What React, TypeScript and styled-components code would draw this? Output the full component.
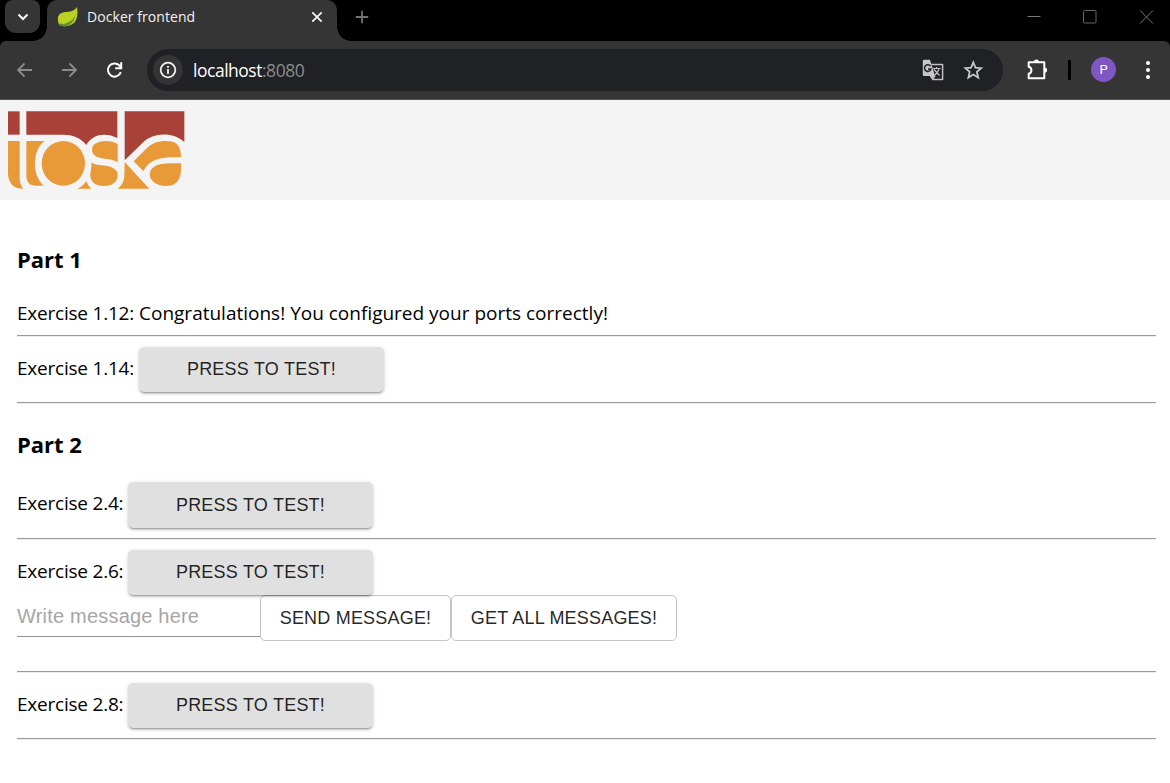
import React from "react";
import styled, { createGlobalStyle } from "styled-components";

const Global = createGlobalStyle`
  * { box-sizing: border-box; }
  body { margin: 0; background: #fff; color: #000; font-family: "Open Sans", "Noto Sans", sans-serif; }
  button, input { font-family: "Liberation Sans", Arial, sans-serif; margin: 0; }
`;

const Page = styled.div`
  width: 1170px;
  height: 783px;
  overflow: hidden;
`;

/* Browser window */
const TabStrip = styled.div`
  display: flex;
  height: 41px;
  background: #000;
`;
const TabSearch = styled.div`
  display: flex;
  align-items: center;
  justify-content: center;
  width: 35px;
  height: 33px;
  margin: 0 7px 0 5px;
  background: #353535;
  border-radius: 8px 8px 11px 11px;
`;
const Tab = styled.div`
  position: relative;
  display: flex;
  align-items: center;
  width: 290px;
  height: 41px;
  padding: 0 13px 8px 10px;
  background: #353535;
  border-radius: 10px 10px 0 0;
`;
const Flare = styled.span<{ $side: "left" | "right" }>`
  position: absolute;
  bottom: 0;
  ${(p) => (p.$side === "left" ? "left: -14px;" : "right: -14px;")}
  width: 14px;
  height: 14px;
  background: radial-gradient(
    circle at ${(p) => (p.$side === "left" ? "0 0" : "100% 0")},
    transparent 13.5px,
    #353535 14px
  );
`;
const TabTitle = styled.span`
  flex: 1;
  margin-left: 8px;
  color: #f2f2f2;
  font-size: 14px;
  letter-spacing: 0.06px;
  line-height: 20px;
  white-space: nowrap;
`;
const NewTab = styled.div`
  display: flex;
  align-items: center;
  height: 33px;
  margin-left: 18px;
`;
const WindowControls = styled.div`
  display: flex;
  align-items: center;
  gap: 42px;
  height: 33px;
  margin-left: auto;
  padding-right: 16px;
`;
const ToolbarBack = styled.div`
  background: #000;
`;
const Toolbar = styled.div`
  display: flex;
  align-items: center;
  height: 59px;
  padding: 0 13px 1px 16px;
  background: #353535;
  border-bottom: 1px solid #555;
  border-radius: 6px 6px 0 0;
`;
const NavIcons = styled.div`
  display: flex;
  align-items: center;
  gap: 26px;
  width: 131px;
`;
const AddressBar = styled.div`
  display: flex;
  align-items: center;
  width: 856px;
  height: 42px;
  padding: 0 19px 0 6px;
  background: #202124;
  border-radius: 21px;
`;
const InfoBadge = styled.div`
  display: flex;
  align-items: center;
  justify-content: center;
  width: 30px;
  height: 30px;
  background: #353535;
  border-radius: 50%;
`;
const Url = styled.span`
  flex: 1;
  margin-left: 10px;
  color: #fff;
  font-size: 17.5px;
  letter-spacing: -0.48px;
  line-height: 24px;
`;
const Port = styled.span`
  color: #8c8c8e;
`;
const AddressActions = styled.div`
  display: flex;
  align-items: center;
  gap: 18px;
`;
const ToolbarActions = styled.div`
  display: flex;
  align-items: center;
  margin-left: 23px;
`;
const Divider = styled.span`
  width: 3px;
  height: 20px;
  margin: 0 20px 0 19px;
  background: #000;
  border-radius: 1px;
`;
const Avatar = styled.span`
  display: flex;
  align-items: center;
  justify-content: center;
  width: 25px;
  height: 25px;
  margin-right: 30px;
  border-radius: 50%;
  background: #7e57c2;
  color: #fff;
  font: 13px Roboto, sans-serif;
`;

/* Page content */
const Banner = styled.header`
  height: 100px;
  background: #f4f4f4;
  svg { display: block; }
`;
const Main = styled.main`
  padding: 41px 14px 0 17px;
`;
const Heading = styled.h2<{ $gap: number }>`
  margin: 0 0 ${(p) => p.$gap}px;
  font-size: 22px;
  font-weight: 700;
  line-height: 36px;
`;
const Row = styled.div<{ $height: number }>`
  display: flex;
  align-items: flex-start;
  height: ${(p) => p.$height}px;
`;
const Label = styled.span<{ $width: number }>`
  width: ${(p) => p.$width}px;
  flex: none;
  font-size: 19px;
  letter-spacing: -0.22px;
  line-height: 42px;
  white-space: nowrap;
`;
const Message = styled.span`
  font-size: 19px;
  line-height: 42px;
  white-space: nowrap;
`;
const Rule = styled.hr<{ $after: number }>`
  height: 2px;
  margin: 0 0 ${(p) => p.$after}px;
  border: 0;
  border-top: 1px solid #9a9a9a;
  border-bottom: 1px solid #eee;
`;
const TestButton = styled.button<{ $tall?: boolean }>`
  position: relative;
  width: 245px;
  height: ${(p) => (p.$tall ? 46 : 45)}px;
  padding: 0 0 ${(p) => (p.$tall ? 0 : 1)}px;
  border: 0;
  border-radius: 5px;
  background: #e0e0e0;
  color: rgba(0, 0, 0, 0.87);
  font-size: 18px;
  letter-spacing: 0.22px;
  box-shadow: 0 3px 1px -2px rgba(0, 0, 0, 0.2), 0 2px 2px 0 rgba(0, 0, 0, 0.14),
    0 1px 5px 0 rgba(0, 0, 0, 0.12);
`;
const MessageInput = styled.input`
  width: 243px;
  height: 42px;
  padding: 1px 0 0;
  border: 0;
  border-bottom: 1px solid #949494;
  border-radius: 0;
  background: transparent;
  font-size: 20px;
  letter-spacing: 0.2px;
  &::placeholder { color: #a6a6a6; opacity: 1; }
`;
const OutlineButton = styled.button<{ $width: number }>`
  width: ${(p) => p.$width}px;
  height: 46px;
  padding: 1px 0 0;
  border: 1px solid #c4c4c4;
  border-radius: 5px;
  background: transparent;
  color: rgba(0, 0, 0, 0.87);
  font-size: 18px;
  letter-spacing: 0.2px;
  white-space: nowrap;
`;

const Leaf = () => (
  <svg width="22" height="22" viewBox="0 0 22 22">
    <path d="M20 1C21 8 21 19 10 20C6 20.5 3 20 2 19C-1 10 2 6 10 6C15 5.500 18 4 20 1Z" fill="#bccf22" />
    <path d="M2.500 18.500C10 18 16 15 18.500 9C17 17 12 21 4 20Z" fill="#5d9432" />
    <circle cx="3.500" cy="18.800" r="1.200" fill="#3f7a2c" />
  </svg>
);

const Translate = () => (
  <svg width="22" height="22" viewBox="0 0 22 22">
    <path d="M9.500 5.500H20.600V20.600H11L8.500 17" fill="none" stroke="#c0c0c0" strokeWidth="1.500" strokeLinejoin="round" />
    <path d="M2 .8H8L13 17H2Q.8 17 .8 15.800V2Q.8 .8 2 .8Z" fill="#c7c7c7" />
    <path d="M8.500 7.200A3.300 3.300 0 1 0 9 10H6" fill="none" stroke="#202124" strokeWidth="1.500" />
    <path d="M11 9.500H18.500M14.500 8V9.500M12 10.500L17.500 16.500M17 10C16 13 14.500 14.500 12.500 16.500" fill="none" stroke="#c0c0c0" strokeWidth="1.200" />
    <path d="M11 21L13.500 17H8.500Z" fill="#c0c0c0" />
  </svg>
);

const ToskaLogo = () => (
  <svg width="200" height="100" viewBox="0 0 600 300">
    <g fill="#a84238">
      <path d="M24 34H59V104H24Z" />
      <path d="M79 34H352V114C320 97 277 100 259 135C242 113 218 104 188 104H79Z" />
      <path d="M374 34H553V126C520 96 460 96 428 128L374 181Z" />
    </g>
    <g fill="#e99a38">
      <path d="M24 123H59V232C59 248 63 259 70 266C40 266 24 249 24 218Z" />
      <path d="M79 123H133C96 153 95 224 131 257H108C88 257 79 247 79 226Z" />
      <ellipse cx="190" cy="190" rx="65" ry="67" />
      <path d="M232 266C244 261 253 253 259 243C262 252 267 260 274 266Z" />
      <path d="M353 132V187C339 176 316 178 299 173C284 169 276 160 276 149C276 122 326 116 353 132Z" />
      <path d="M274 187C288 198 307 194 326 199C344 204 353 213 353 225C353 248 335 258 312 258C286 258 271 245 271 226C271 213 276 204 274 187Z" />
      <path d="M374 186L448 266H353C367 255 373 242 373 224Z" />
      <path d="M401 184L438 147C455 130 474 123 497 123C530 123 543 136 543 172H517C470 172 443 186 430 214Z" />
      <path d="M543 190V207C543 240 528 258 498 258C470 258 450 242 449 224C450 201 471 190 510 190Z" />
    </g>
  </svg>
);

const Browser = () => (
  <>
    <TabStrip>
      <TabSearch>
        <svg width="12" height="8" viewBox="0 0 12 8">
          <path d="M1.500 1.500L6 6L10.500 1.500" fill="none" stroke="#fff" strokeWidth="2" />
        </svg>
      </TabSearch>
      <Tab>
        <Flare $side="left" />
        <Leaf />
        <TabTitle>Docker frontend</TabTitle>
        <svg width="14" height="14" viewBox="0 0 14 14">
          <path d="M2.300 2.300L11.700 11.700M11.700 2.300L2.300 11.700" stroke="#f5f5f5" strokeWidth="1.800" />
        </svg>
        <Flare $side="right" />
      </Tab>
      <NewTab>
        <svg width="14" height="14" viewBox="0 0 14 14">
          <path d="M7 .8V13.200M.8 7H13.200" stroke="#747474" strokeWidth="1.800" />
        </svg>
      </NewTab>
      <WindowControls>
        <svg width="14" height="14" viewBox="0 0 14 14">
          <path d="M.5 6.500H13.500" stroke="#777" />
        </svg>
        <svg width="14" height="14" viewBox="0 0 14 14">
          <rect x=".5" y=".5" width="12.500" height="12.500" rx="1" fill="none" stroke="#666" />
        </svg>
        <svg width="15" height="14" viewBox="0 0 15 14">
          <path d="M1 .5L14 13.500M14 .5L1 13.500" stroke="#777" />
        </svg>
      </WindowControls>
    </TabStrip>
    <ToolbarBack>
      <Toolbar>
        <NavIcons>
          <svg width="18" height="18" viewBox="0 0 18 18">
            <path d="M16 9H2.500M8.500 2.500L2 9L8.500 15.500" fill="none" stroke="#8b8b8b" strokeWidth="1.800" />
          </svg>
          <svg width="18" height="18" viewBox="0 0 18 18">
            <path d="M2 9H15.500M9.500 2.500L16 9L9.500 15.500" fill="none" stroke="#8b8b8b" strokeWidth="1.800" />
          </svg>
          <svg width="20" height="20" viewBox="0 0 20 20">
            <path d="M16.800 12.200A6.600 6.600 0 1 1 15.400 5.500L17 7.400" fill="none" stroke="#fff" strokeWidth="2" />
            <path d="M17.200 2.200V8.200H11.200" fill="none" stroke="#fff" strokeWidth="2" />
          </svg>
        </NavIcons>
        <AddressBar>
          <InfoBadge>
            <svg width="18" height="18" viewBox="0 0 18 18">
              <circle cx="9" cy="9" r="7.300" fill="none" stroke="#f0f0f0" strokeWidth="1.800" />
              <path d="M9 8V13M9 5V6.800" stroke="#f0f0f0" strokeWidth="1.800" />
            </svg>
          </InfoBadge>
          <Url>
            localhost<Port>:8080</Port>
          </Url>
          <AddressActions>
            <Translate />
            <svg width="22" height="22" viewBox="0 0 22 22">
              <path
                d="M11.300 3.300L13.500 8.600L19.200 9.100L14.900 12.900L16.200 18.500L11.300 15.500L6.400 18.500L7.700 12.900L3.400 9.100L9.100 8.600Z"
                fill="none" stroke="#c7c7c7" strokeWidth="1.800"
              />
            </svg>
          </AddressActions>
        </AddressBar>
        <ToolbarActions>
          <svg width="23" height="23" viewBox="0 0 23 23">
            <path
              d="M2.700 4.200H18.300V20.300H2.700V15.800C6.300 15 6.300 9.500 2.700 8.700Z"
              fill="none" stroke="#fff" strokeWidth="2" strokeLinejoin="round"
            />
            <path d="M7.800 4A2.600 2.600 0 0 1 13 4ZM18.500 9.500A2.600 2.600 0 0 1 18.500 14.700Z" fill="#fff" />
          </svg>
          <Divider />
          <Avatar>P</Avatar>
          <svg width="4" height="20" viewBox="0 0 4 20">
            <g fill="#fff">
              <circle cx="2" cy="3" r="2" />
              <circle cx="2" cy="10" r="2" />
              <circle cx="2" cy="17" r="2" />
            </g>
          </svg>
        </ToolbarActions>
      </Toolbar>
    </ToolbarBack>
  </>
);

export default function App() {
  return (
    <Page>
      <Global />
      <Browser />
      <Banner>
        <ToskaLogo />
      </Banner>
      <Main>
        <Heading $gap={15}>Part 1</Heading>
        <Row $height={43}>
          <Label $width={122}>Exercise 1.12:</Label>
          <Message>Congratulations! You configured your ports correctly!</Message>
        </Row>
        <Rule $after={10} />
        <Row $height={55}>
          <Label $width={122}>Exercise 1.14:</Label>
          <TestButton>PRESS TO TEST!</TestButton>
        </Row>
        <Rule $after={22} />
        <Heading $gap={20}>Part 2</Heading>
        <Row $height={56}>
          <Label $width={111}>Exercise 2.4:</Label>
          <TestButton $tall>PRESS TO TEST!</TestButton>
        </Row>
        <Rule $after={10} />
        <Row $height={45}>
          <Label $width={111}>Exercise 2.6:</Label>
          <TestButton>PRESS TO TEST!</TestButton>
        </Row>
        <Row $height={76}>
          <MessageInput placeholder="Write message here" />
          <OutlineButton $width={191}>SEND MESSAGE!</OutlineButton>
          <OutlineButton $width={226}>GET ALL MESSAGES!</OutlineButton>
        </Row>
        <Rule $after={10} />
        <Row $height={55}>
          <Label $width={111}>Exercise 2.8:</Label>
          <TestButton>PRESS TO TEST!</TestButton>
        </Row>
        <Rule $after={0} />
      </Main>
    </Page>
  );
}
